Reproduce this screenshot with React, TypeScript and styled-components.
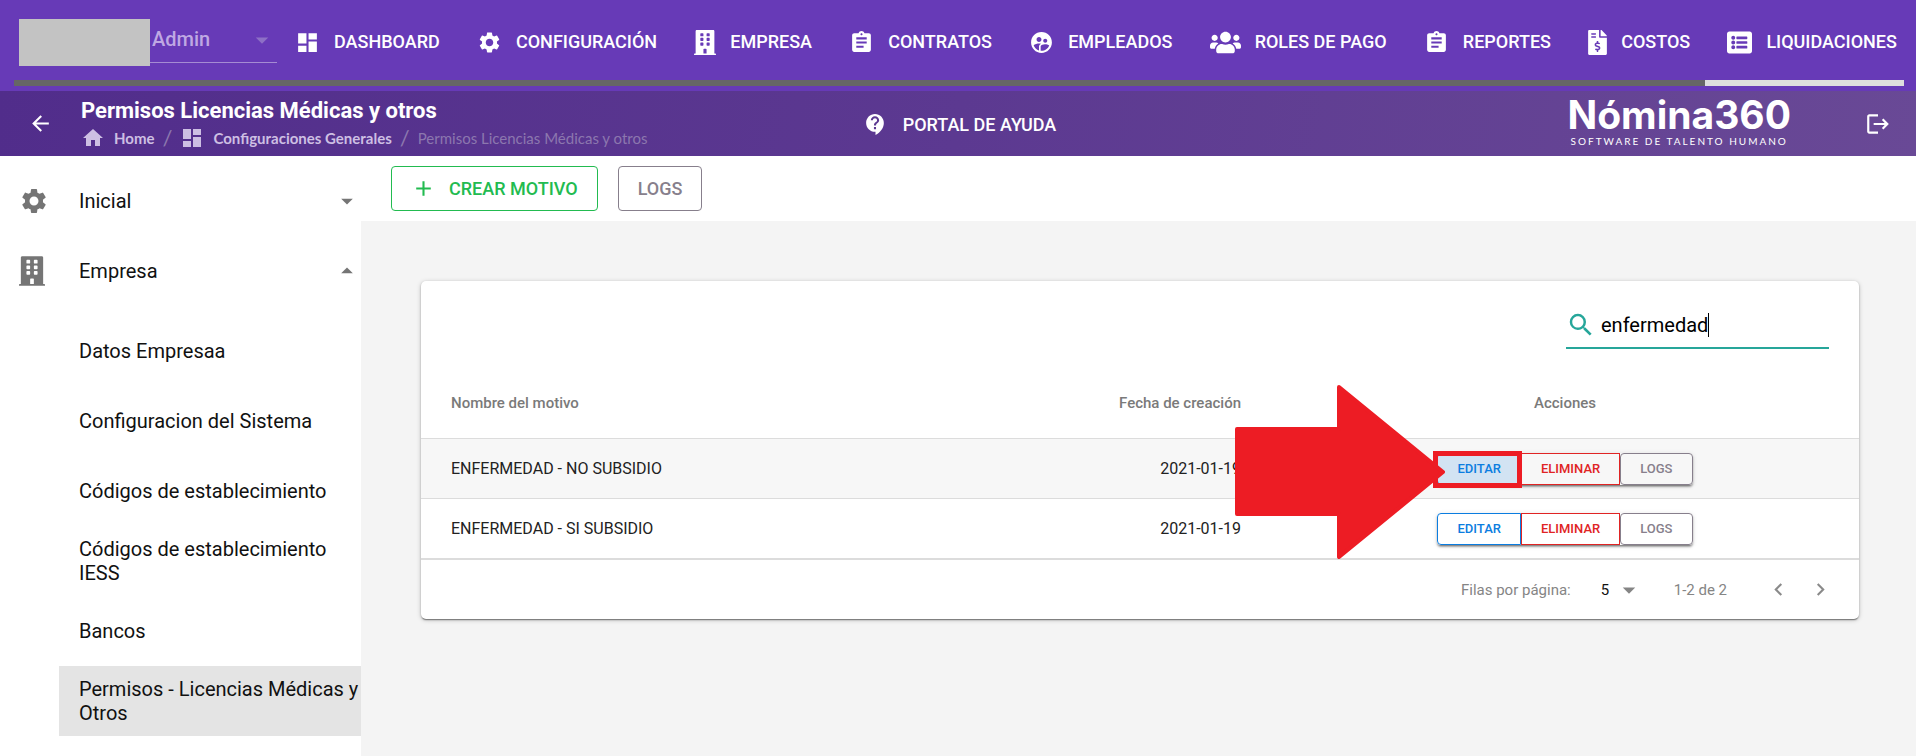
import React from "react";
import styled, { createGlobalStyle } from "styled-components";
import {
  MdAdd,
  MdArrowBack,
  MdArrowDropDown,
  MdArrowDropUp,
  MdAssignment,
  MdChevronLeft,
  MdChevronRight,
  MdContactSupport,
  MdDashboard,
  MdHome,
  MdLogout,
  MdSearch,
  MdSettings,
  MdSupervisedUserCircle,
} from "react-icons/md";
import { FaBuilding, FaFileInvoiceDollar, FaListAlt, FaUsers } from "react-icons/fa";

const GlobalStyle = createGlobalStyle`
  *, *::before, *::after { box-sizing: border-box; }
  body { margin: 0; background: #f4f4f4; font-family: Roboto, "Liberation Sans", sans-serif; color: #111; }
  button, input, select { font: inherit; color: inherit; }
  button { cursor: pointer; background: none; border: 0; padding: 0; }
  a { color: inherit; text-decoration: none; }
  ul, ol { margin: 0; padding: 0; list-style: none; }
`;

const Page = styled.div`
  display: flex;
  flex-direction: column;
  min-height: 100vh;
`;

const TopBar = styled.header`
  background: #673ab7;
  color: #fff;
  padding: 0 12px 5px 14px;
`;

const TopRow = styled.div`
  display: flex;
  align-items: center;
  height: 80px;
  padding-left: 5px;
`;

const AccountMask = styled.div`
  flex: none;
  width: 131px;
  height: 47px;
  margin-top: 5px;
  background: #c3c3c3;
`;

const AccountField = styled.div`
  position: relative;
  flex: none;
  width: 127px;
  height: 46px;
  border-bottom: 1px solid #a58bd3;
  color: #bfa8e3;
  svg {
    position: absolute;
    top: 8px;
    right: 0;
    pointer-events: none;
    color: #8d70c6;
  }
`;

const AccountSelect = styled.select`
  appearance: none;
  width: 100%;
  height: 44px;
  padding: 0 0 0 2px;
  border: 0;
  background: none;
  font-size: 20px;
  font-weight: 500;
`;

const Nav = styled.nav`
  flex: 1;
  display: flex;
  justify-content: space-between;
  padding: 4px 7px 0 18px;
`;

const NavLink = styled.a<{ $iconWidth: number }>`
  display: flex;
  align-items: center;
  gap: 14px;
  font-size: 18px;
  font-weight: 500;
  line-height: 32px;
  white-space: nowrap;
  svg {
    flex: none;
    width: ${(p) => p.$iconWidth}px;
    height: 25px;
  }
`;

const ScrollTrack = styled.div`
  display: flex;
  justify-content: flex-end;
  height: 6px;
  background: #666;
`;

const ScrollThumb = styled.div`
  width: 199px;
  background: #dedede;
`;

const SubBar = styled.section`
  display: grid;
  grid-template-columns: 1fr auto 1fr;
  align-items: center;
  height: 65px;
  padding: 0 25px 0 28px;
  color: #fff;
  background: linear-gradient(100deg, #512d8b 0%, #5c3991 50%, #694996 100%);
`;

const Heading = styled.div`
  display: flex;
  align-items: center;
  gap: 28px;
`;

const IconButton = styled.button`
  display: flex;
  align-items: center;
  justify-content: center;
  color: inherit;
`;

const Title = styled.h1`
  margin: 0;
  font-size: 22px;
  line-height: 28px;
  font-weight: 700;
`;

const Crumbs = styled.ol`
  display: flex;
  align-items: center;
  font-family: Lato, "Liberation Sans", sans-serif;
  font-size: 15px;
  line-height: 26px;
  color: #8c77ae;
  li {
    display: flex;
    align-items: center;
  }
  li + li::before {
    content: "/";
    margin: 0 8px;
    font-size: 22px;
  }
`;

const CrumbLink = styled.a`
  display: flex;
  align-items: center;
  gap: 9px;
  color: #cdbfe3;
  font-weight: 700;
`;

const HelpLink = styled.a`
  display: flex;
  align-items: center;
  gap: 15px;
  padding-top: 2px;
  font-size: 18px;
  font-weight: 500;
`;

const BrandSide = styled.div`
  display: flex;
  justify-content: flex-end;
  align-items: center;
  gap: 74px;
`;

const Brand = styled.div`
  display: flex;
  flex-direction: column;
  align-items: center;
  padding-bottom: 2px;
`;

const BrandName = styled.span`
  font-family: Inter, "Liberation Sans", sans-serif;
  font-size: 39px;
  line-height: 36px;
  font-weight: 700;
`;

const BrandTag = styled.span`
  font-family: Lato, "Liberation Sans", sans-serif;
  font-size: 10px;
  line-height: 16px;
  letter-spacing: 2px;
`;

const Body = styled.div`
  flex: 1;
  display: flex;
`;

const Sidebar = styled.aside`
  flex: none;
  width: 361px;
  padding: 10px 0 20px;
  background: #fff;
  font-size: 20px;
  line-height: 24px;
`;

const Section = styled.button`
  display: flex;
  align-items: center;
  width: 100%;
  height: 70px;
  padding-left: 19px;
  text-align: left;
  svg {
    color: #757575;
  }
`;

const SectionIcon = styled.span<{ $iconWidth: number }>`
  display: flex;
  width: 60px;
  svg {
    width: ${(p) => p.$iconWidth}px;
    height: 30px;
  }
`;

const SectionLabel = styled.span`
  flex: 1;
`;

const SubList = styled.ul`
  padding: 10px 0 0 59px;
`;

const SubLink = styled.a<{ $active?: boolean }>`
  display: flex;
  align-items: center;
  height: 70px;
  padding-left: 20px;
  background: ${(p) => (p.$active ? "#e4e4e4" : "transparent")};
`;

const Main = styled.main`
  flex: 1;
  min-width: 0;
`;

const Toolbar = styled.div`
  display: flex;
  gap: 20px;
  padding: 10px 30px;
  background: #fff;
`;

const tones = { green: "#22bb50", grey: "#877f8c", blue: "#0b7de0", red: "#e02424" };

const OutlineButton = styled.button<{ $tone: keyof typeof tones }>`
  display: flex;
  align-items: center;
  gap: 13px;
  height: 45px;
  padding: 0 19px;
  border: 1px solid ${(p) => tones[p.$tone]};
  border-radius: 4px;
  color: ${(p) => tones[p.$tone]};
  font-size: 18px;
  font-weight: 500;
`;

const Card = styled.section`
  margin: 60px 57px 60px 60px;
  border-radius: 5px;
  background: #fff;
  box-shadow: 0 2px 1px -1px rgba(0, 0, 0, 0.3), 0 1px 2px rgba(0, 0, 0, 0.25), 0 1px 5px rgba(0, 0, 0, 0.2);
`;

const SearchRow = styled.div`
  display: flex;
  justify-content: flex-end;
  height: 80px;
  padding: 22px 30px 0;
`;

const SearchField = styled.label`
  display: flex;
  align-items: center;
  width: 263px;
  height: 46px;
  border-bottom: 2px solid #26a69a;
  svg {
    margin-right: 5px;
    color: #26a69a;
  }
`;

const SearchInput = styled.input`
  field-sizing: content;
  max-width: 220px;
  padding: 0;
  border: 0;
  outline: 0;
  background: none;
  font-size: 20px;
  color: #000;
`;

const Caret = styled.span`
  width: 1px;
  height: 24px;
  background: #000;
`;

const Table = styled.table`
  width: 100%;
  table-layout: fixed;
  border-collapse: separate;
  border-spacing: 0;
  font-size: 16px;
`;

const NameCol = styled.col`
  width: 38%;
`;

const ActionsCol = styled.col`
  width: 588px;
`;

const Th = styled.th<{ $align: string }>`
  height: 78px;
  padding: 6px 30px 0;
  border-bottom: 1px solid #dcdcdc;
  text-align: ${(p) => p.$align};
  font-size: 15px;
  font-weight: 500;
  color: #7a7a7a;
`;

const Row = styled.tr<{ $hover?: boolean }>`
  background: ${(p) => (p.$hover ? "#f7f7f7" : "#fff")};
`;

const Td = styled.td<{ $align: string }>`
  height: 60px;
  padding: 0 30px;
  border-bottom: 1px solid #dcdcdc;
  text-align: ${(p) => p.$align};
  color: #222;
`;

const ActionGroup = styled.div`
  position: relative;
  display: inline-flex;
  vertical-align: middle;
  border-radius: 4px;
  box-shadow: 0 3px 1px -2px rgba(0, 0, 0, 0.2), 0 2px 2px rgba(0, 0, 0, 0.3), 0 1px 5px rgba(0, 0, 0, 0.12);
`;

const ActionButton = styled.button<{ $tone: keyof typeof tones; $fill: string }>`
  height: 32px;
  padding: 0 19px;
  border: 1px solid ${(p) => tones[p.$tone]};
  background: ${(p) => p.$fill};
  color: ${(p) => tones[p.$tone]};
  font-size: 13px;
  font-weight: 500;
  &:first-child { border-radius: 4px 0 0 4px; }
  &:nth-child(3) { border-radius: 4px; }
`;

const HighlightBox = styled.span`
  position: absolute;
  top: -2px;
  left: -4px;
  width: 89px;
  height: 37px;
  border: 5px solid #ed1c24;
  pointer-events: none;
`;

const HighlightArrow = styled.svg`
  position: absolute;
  top: -68px;
  left: -202px;
  width: 210px;
  height: 174px;
  pointer-events: none;
`;

const Footer = styled.footer`
  display: flex;
  align-items: center;
  justify-content: flex-end;
  height: 60px;
  padding-right: 26px;
  border-top: 1px solid #dcdcdc;
  font-size: 15px;
  color: #858585;
`;

const RowsField = styled.div`
  position: relative;
  display: flex;
  align-items: center;
  width: 43px;
  margin: 0 30px;
  color: #111;
  svg {
    position: absolute;
    right: 0;
    color: #858585;
    pointer-events: none;
  }
`;

const RowsSelect = styled.select`
  appearance: none;
  width: 100%;
  padding: 0;
  border: 0;
  background: none;
`;

const Pager = styled.div`
  display: flex;
  gap: 17px;
  margin-left: 39px;
  color: #8a8a8a;
`;

const navItems = [
  { label: "DASHBOARD", Icon: MdDashboard, width: 25 },
  { label: "CONFIGURACIÓN", Icon: MdSettings, width: 25 },
  { label: "EMPRESA", Icon: FaBuilding, width: 22 },
  { label: "CONTRATOS", Icon: MdAssignment, width: 25 },
  { label: "EMPLEADOS", Icon: MdSupervisedUserCircle, width: 25 },
  { label: "ROLES DE PAGO", Icon: FaUsers, width: 31 },
  { label: "REPORTES", Icon: MdAssignment, width: 25 },
  { label: "COSTOS", Icon: FaFileInvoiceDollar, width: 19 },
  { label: "LIQUIDACIONES", Icon: FaListAlt, width: 25 },
];

const companyItems = [
  "Datos Empresaa",
  "Configuracion del Sistema",
  "Códigos de establecimiento",
  "Códigos de establecimiento IESS",
  "Bancos",
  "Permisos - Licencias Médicas y Otros",
];

const reasons = [
  { name: "ENFERMEDAD - NO SUBSIDIO", date: "2021-01-19", marked: true },
  { name: "ENFERMEDAD - SI SUBSIDIO", date: "2021-01-19", marked: false },
];

export default function App() {
  return (
    <Page>
      <GlobalStyle />
      <TopBar>
        <TopRow>
          <AccountMask />
          <AccountField>
            <AccountSelect aria-label="Cuenta">
              <option>Admin</option>
            </AccountSelect>
            <MdArrowDropDown size={30} />
          </AccountField>
          <Nav>
            {navItems.map(({ label, Icon, width }) => (
              <NavLink href="#" key={label} $iconWidth={width}>
                <Icon />
                {label}
              </NavLink>
            ))}
          </Nav>
        </TopRow>
        <ScrollTrack>
          <ScrollThumb />
        </ScrollTrack>
      </TopBar>

      <SubBar>
        <Heading>
          <IconButton aria-label="Volver">
            <MdArrowBack size={25} />
          </IconButton>
          <div>
            <Title>Permisos Licencias Médicas y otros</Title>
            <Crumbs>
              <li>
                <CrumbLink href="#">
                  <MdHome size={24} />
                  Home
                </CrumbLink>
              </li>
              <li>
                <CrumbLink href="#">
                  <MdDashboard size={24} />
                  Configuraciones Generales
                </CrumbLink>
              </li>
              <li>Permisos Licencias Médicas y otros</li>
            </Crumbs>
          </div>
        </Heading>
        <HelpLink href="#">
          <MdContactSupport size={25} />
          PORTAL DE AYUDA
        </HelpLink>
        <BrandSide>
          <Brand>
            <BrandName>Nómina360</BrandName>
            <BrandTag>SOFTWARE DE TALENTO HUMANO</BrandTag>
          </Brand>
          <IconButton aria-label="Salir">
            <MdLogout size={26} />
          </IconButton>
        </BrandSide>
      </SubBar>

      <Body>
        <Sidebar>
          <Section>
            <SectionIcon $iconWidth={30}>
              <MdSettings />
            </SectionIcon>
            <SectionLabel>Inicial</SectionLabel>
            <MdArrowDropDown size={28} />
          </Section>
          <Section>
            <SectionIcon $iconWidth={26}>
              <FaBuilding />
            </SectionIcon>
            <SectionLabel>Empresa</SectionLabel>
            <MdArrowDropUp size={28} />
          </Section>
          <SubList>
            {companyItems.map((item, i) => (
              <li key={item}>
                <SubLink href="#" $active={i === companyItems.length - 1}>
                  {item}
                </SubLink>
              </li>
            ))}
          </SubList>
        </Sidebar>

        <Main>
          <Toolbar>
            <OutlineButton $tone="green">
              <MdAdd size={25} />
              CREAR MOTIVO
            </OutlineButton>
            <OutlineButton $tone="grey">LOGS</OutlineButton>
          </Toolbar>

          <Card>
            <SearchRow>
              <SearchField>
                <MdSearch size={30} />
                <SearchInput type="text" aria-label="Buscar" defaultValue="enfermedad" />
                <Caret />
              </SearchField>
            </SearchRow>
            <Table>
              <colgroup>
                <NameCol />
                <col />
                <ActionsCol />
              </colgroup>
              <thead>
                <tr>
                  <Th $align="left">Nombre del motivo</Th>
                  <Th $align="right">Fecha de creación</Th>
                  <Th $align="center">Acciones</Th>
                </tr>
              </thead>
              <tbody>
                {reasons.map((reason) => {
                  const fill = reason.marked ? "#f7f7f7" : "#fff";
                  return (
                    <Row key={reason.name} $hover={reason.marked}>
                      <Td $align="left">{reason.name}</Td>
                      <Td $align="right">{reason.date}</Td>
                      <Td $align="center">
                        <ActionGroup>
                          <ActionButton $tone="blue" $fill={reason.marked ? "#d2e3f3" : fill}>
                            EDITAR
                          </ActionButton>
                          <ActionButton $tone="red" $fill={fill}>
                            ELIMINAR
                          </ActionButton>
                          <ActionButton $tone="grey" $fill={fill}>
                            LOGS
                          </ActionButton>
                          {reason.marked && (
                            <>
                              <HighlightBox />
                              <HighlightArrow viewBox="0 0 210 174" aria-hidden="true">
                                <path
                                  d="M2 44H104V2L208 87L104 172V129H2Z"
                                  fill="#ed1c24"
                                  stroke="#ed1c24"
                                  strokeWidth="4"
                                  strokeLinejoin="round"
                                />
                              </HighlightArrow>
                            </>
                          )}
                        </ActionGroup>
                      </Td>
                    </Row>
                  );
                })}
              </tbody>
            </Table>
            <Footer>
              <label htmlFor="rows">Filas por página:</label>
              <RowsField>
                <RowsSelect id="rows">
                  <option>5</option>
                </RowsSelect>
                <MdArrowDropDown size={30} />
              </RowsField>
              <span>1-2 de 2</span>
              <Pager>
                <IconButton aria-label="Página anterior">
                  <MdChevronLeft size={25} />
                </IconButton>
                <IconButton aria-label="Página siguiente">
                  <MdChevronRight size={25} />
                </IconButton>
              </Pager>
            </Footer>
          </Card>
        </Main>
      </Body>
    </Page>
  );
}
